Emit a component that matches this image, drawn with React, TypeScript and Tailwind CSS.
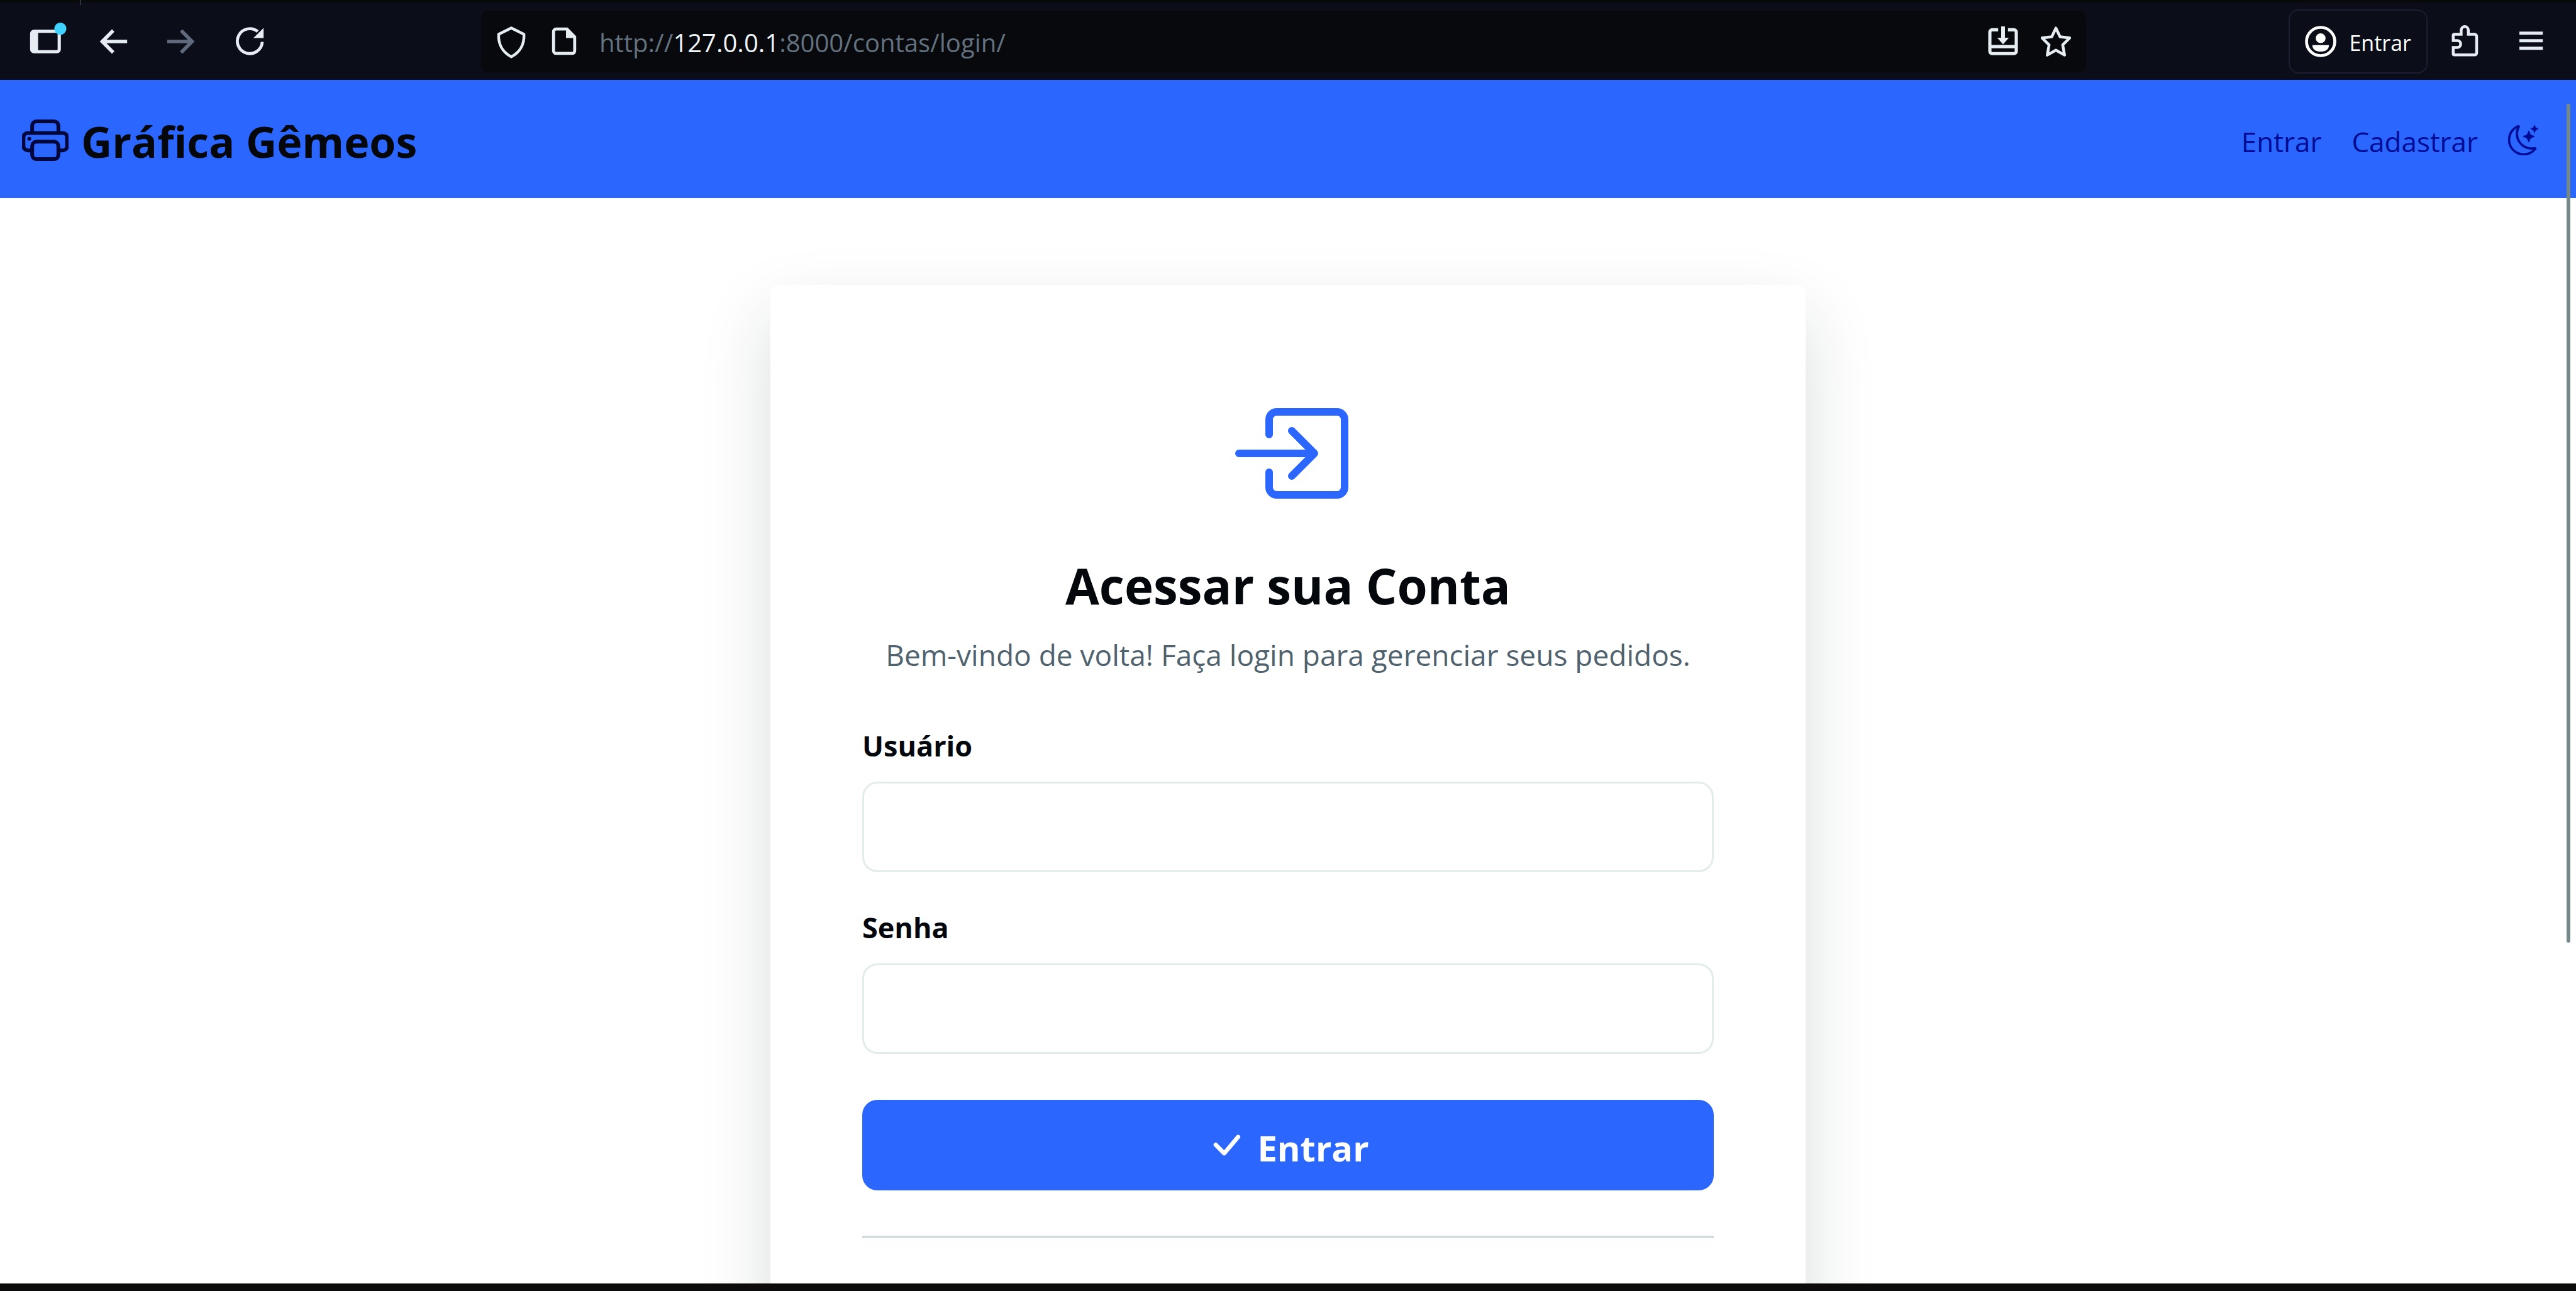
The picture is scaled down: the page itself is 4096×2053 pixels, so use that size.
import type { ReactNode } from "react";
import { BsBoxArrowInRight, BsCheckLg, BsMoonStars, BsPrinter } from "react-icons/bs";

function ToolIcon({ label, className, children }: { label: string; className?: string; children: ReactNode }) {
  return (
    <button type="button" aria-label={label} className={`shrink-0 ${className ?? ""}`}>
      <svg
        viewBox="0 0 16 16"
        className="size-12 overflow-visible"
        fill="none"
        stroke="currentColor"
        strokeWidth="1.6"
        aria-hidden="true"
      >
        {children}
      </svg>
    </button>
  );
}

function BrowserBar() {
  return (
    <div className="relative flex h-[127px] shrink-0 items-center border-t-4 border-[#07090b] bg-[#0b0d18] text-[#e6edf2]">
      <span className="absolute -top-1 left-[127px] h-2 w-0.5 bg-[#2d3340]" />
      <div className="flex w-[765px] shrink-0 items-center gap-[60px] pl-12">
        <ToolIcon label="Barra lateral">
          <rect x="0.8" y="2.6" width="14.6" height="10.8" rx="1.2" strokeWidth="1.7" />
          <path d="M0.8 3h3.4v10H0.8z" fill="currentColor" stroke="none" />
          <circle cx="16" cy="1.2" r="3.2" fill="#41d3ff" stroke="none" />
        </ToolIcon>
        <ToolIcon label="Voltar">
          <path d="M15.4 8H2M8 2.2 2.2 8 8 13.8" strokeWidth="1.9" />
        </ToolIcon>
        <ToolIcon label="Avançar" className="text-[#5f6b7d]">
          <path d="M0.6 8h13.4M8 2.2 13.8 8 8 13.8" strokeWidth="1.9" />
        </ToolIcon>
        <ToolIcon label="Recarregar">
          <path d="M15 8.2A6.6 6.6 0 1 1 12.6 2.7" strokeWidth="1.6" />
          <path d="M15.7 0.8v5.4h-5.4z" fill="currentColor" stroke="none" />
        </ToolIcon>
      </div>

      <div className="flex h-[98px] min-w-0 flex-1 items-center rounded-xl bg-[#07090d] pr-6 pl-6">
        <ToolIcon label="Proteção">
          <path
            d="M8 0.8 14.7 4.2C15 9.6 12.4 13.8 8 16.1 3.6 13.8 1 9.6 1.3 4.2z"
            strokeWidth="1.5"
            strokeLinejoin="round"
          />
        </ToolIcon>
        <ToolIcon label="Informações do site" className="ml-9">
          <path d="M3.7 1.4h5.8l4.1 4.2v7.4a1.3 1.3 0 0 1-1.3 1.3H3.7a1.3 1.3 0 0 1-1.3-1.3V2.7a1.3 1.3 0 0 1 1.3-1.3z" />
          <path d="M9 0.8h0.8L14.3 5.3v0.9H9z" fill="currentColor" stroke="none" />
        </ToolIcon>
        <div className="ml-8 min-w-0 flex-1 pt-1 text-[40px] leading-[60px] whitespace-nowrap text-[#64727f]">
          http://<span className="text-[#eef3f6]">127.0.0.1</span>:8000/contas/login/
        </div>
        <ToolIcon label="Instalar aplicativo">
          <path
            d="M5.4 1.8H2.2A1.2 1.2 0 0 0 1 3v10.2a1.2 1.2 0 0 0 1.2 1.2h11.6a1.2 1.2 0 0 0 1.2-1.2V3a1.2 1.2 0 0 0-1.2-1.2h-3.2M1 10.7h14"
            strokeWidth="1.7"
          />
          <path d="M8 0v7" strokeWidth="2" />
          <path d="M4.9 6h6.2L8 9.5z" fill="currentColor" stroke="none" />
        </ToolIcon>
        <ToolIcon label="Favoritar" className="ml-9">
          <path
            d="M8 0.9 10.2 5.5 15.3 6.1 11.6 9.8 12.6 15.2 8 12.6 3.4 15.2 4.4 9.8 0.7 6.1 5.8 5.5z"
            strokeWidth="1.5"
            strokeLinejoin="round"
          />
        </ToolIcon>
      </div>

      <div className="flex w-[779px] shrink-0 items-center justify-end pr-12">
        <button
          type="button"
          className="flex h-[102px] items-center gap-5 rounded-2xl border-2 border-[#1a1f34] px-6 text-[34px] leading-[48px] text-white"
        >
          <svg viewBox="0 0 16 16" className="size-[50px]" fill="currentColor" aria-hidden="true">
            <circle cx="8" cy="8" r="7.2" fill="none" stroke="currentColor" strokeWidth="1.5" />
            <circle cx="8" cy="6.3" r="2.5" />
            <path d="M3.8 9.8h8.4c0 2-1.4 3.3-4.2 3.3S3.8 11.8 3.8 9.8z" />
          </svg>
          <span className="pt-1">Entrar</span>
        </button>
        <ToolIcon label="Extensões" className="ml-9">
          <path
            d="M2.2 4.2h3.6V2a1.9 1.9 0 0 1 3.8 0v2.2h3.4a1 1 0 0 1 1 1v8.9a1 1 0 0 1-1 1H2.2a.6.6 0 0 1-.6-.6v-3.3h2.1a1.8 1.8 0 0 0 0-3.7H1.6V4.8a.6.6 0 0 1 .6-.6z"
            strokeWidth="1.5"
          />
        </ToolIcon>
        <ToolIcon label="Menu" className="ml-14">
          <path d="M2 3.6h12.4M2 7.6h12.4M2 11.6h12.4" strokeWidth="1.7" />
        </ToolIcon>
      </div>
    </div>
  );
}

function SiteNav() {
  return (
    <header className="flex h-[188px] shrink-0 items-center justify-between bg-[#2b66ff] pt-1 pr-[60px] pl-[35px] text-[#000c96]">
      <a href="#" className="flex items-center gap-5 text-[68px] leading-[96px] font-bold text-[#04080c]">
        <BsPrinter className="size-[74px] text-[#00073c]" stroke="currentColor" strokeWidth="0.3" aria-hidden="true" />
        <span className="pt-1">Gráfica Gêmeos</span>
      </a>
      <nav className="flex items-center gap-12 text-[44px] leading-[72px]">
        <a href="#" className="pt-1">
          Entrar
        </a>
        <a href="#" className="pt-1">
          Cadastrar
        </a>
        <button type="button" aria-label="Alternar tema">
          <BsMoonStars className="size-12" stroke="currentColor" strokeWidth="0.2" aria-hidden="true" />
        </button>
      </nav>
    </header>
  );
}

function Field({ id, label, type }: { id: string; label: string; type: string }) {
  return (
    <div className="flex flex-col">
      <label htmlFor={id} className="text-[45px] leading-[70px] font-bold text-[#04080c]">
        {label}
      </label>
      <input
        id={id}
        type={type}
        className="mt-[22px] h-36 w-full rounded-3xl border-3 border-[#e2eceb] bg-white px-9 text-[45px] text-[#04080c] outline-none"
      />
    </div>
  );
}

function LoginCard() {
  return (
    <section className="w-full max-w-[1646px] rounded-xl bg-white px-[146px] pt-[172px] pb-36 shadow-[0_48px_112px_rgba(0,36,36,0.15)]">
      <BsBoxArrowInRight className="mx-auto size-48 text-[#2b66ff]" aria-hidden="true" />
      <h1 className="mt-16 text-center text-[78px] leading-[100px] font-bold text-[#04080c]">Acessar sua Conta</h1>
      <p className="mt-6 text-center text-[46px] leading-[72px] whitespace-nowrap text-[#4f626d]">
        Bem-vindo de volta! Faça login para gerenciar seus pedidos.
      </p>
      <form className="mt-[74px] flex flex-col gap-[53px]" onSubmit={(event) => event.preventDefault()}>
        <Field id="usuario" label="Usuário" type="text" />
        <Field id="senha" label="Senha" type="password" />
        <button
          type="submit"
          className="mt-5 flex h-36 w-full items-center justify-center gap-5 rounded-3xl bg-[#2b66ff] text-[56px] leading-[80px] font-bold text-white"
        >
          <BsCheckLg className="size-[60px]" stroke="currentColor" strokeWidth="0.3" aria-hidden="true" />
          <span className="pt-2">Entrar</span>
        </button>
      </form>
      <hr className="mt-[72px] border-t-4 border-[#d3dddd]" />
    </section>
  );
}

export default function App() {
  return (
    <div className="relative flex h-screen flex-col overflow-hidden bg-white font-['Open_Sans','Noto_Sans',sans-serif]">
      <BrowserBar />
      <SiteNav />
      <main className="flex min-h-0 flex-1 items-start justify-center overflow-hidden pt-[138px]">
        <LoginCard />
      </main>
      <div className="h-3 shrink-0 bg-[#0e0c0a]" />
      <div className="absolute top-[165px] right-[9px] h-[65%] w-1.5 rounded-full bg-[#758a88]" />
    </div>
  );
}
